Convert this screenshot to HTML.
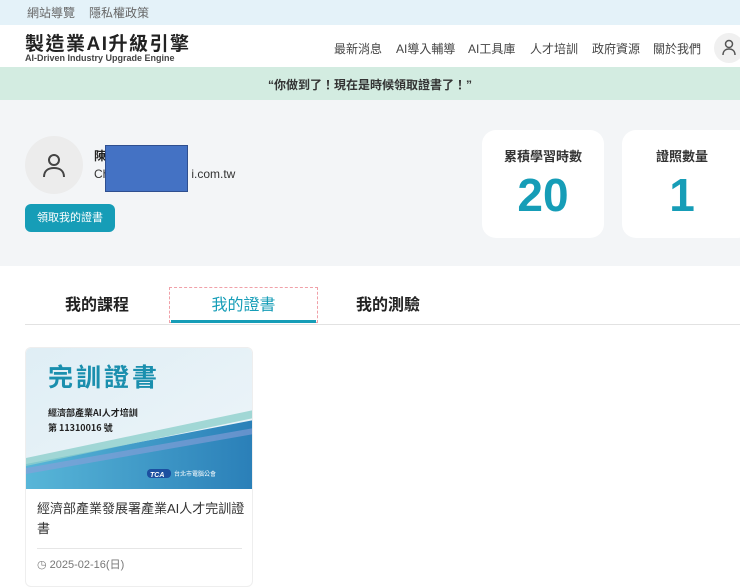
<!DOCTYPE html>
<html><head><meta charset="utf-8"><style>
*{margin:0;padding:0;box-sizing:border-box}
body{width:740px;height:580px;overflow:hidden;background:#fff;font-family:"Liberation Sans","Noto Sans CJK TC",sans-serif;position:relative;color:#222}
.a{position:absolute}
</style></head><body>
<div class="a" style="left:0;top:0;width:740px;height:25px;background:#e4f2f9"></div>
<div class="a" style="left:27px;top:4px;font-size:12px;color:#666">網站導覽</div>
<div class="a" style="left:89px;top:4px;font-size:12px;color:#666">隱私權政策</div>
<div class="a" style="left:0;top:25px;width:740px;height:42px;background:#fff"></div>
<div class="a" style="left:25px;top:29px;font-size:19px;font-weight:bold;color:#222;letter-spacing:1.5px">製造業AI升級引擎</div>
<div class="a" style="left:25px;top:53px;font-size:9px;font-weight:bold;color:#444">AI-Driven Industry Upgrade Engine</div>
<div class="a" style="left:334px;top:40px;font-size:12px;color:#444">最新消息</div>
<div class="a" style="left:396px;top:40px;font-size:12px;color:#444">AI導入輔導</div>
<div class="a" style="left:468px;top:40px;font-size:12px;color:#444">AI工具庫</div>
<div class="a" style="left:530px;top:40px;font-size:12px;color:#444">人才培訓</div>
<div class="a" style="left:592px;top:40px;font-size:12px;color:#444">政府資源</div>
<div class="a" style="left:653px;top:40px;font-size:12px;color:#444">關於我們</div>
<div class="a" style="left:714px;top:33px;width:30px;height:30px;border-radius:50%;background:#f0f0f0"></div>
<svg class="a" style="left:720px;top:38px" width="18" height="18" viewBox="0 0 18 18" fill="none" stroke="#555" stroke-width="1.5"><circle cx="9" cy="6" r="3.5"/><path d="M3 17c0-4 2.5-6 6-6s6 2 6 6"/></svg>
<div class="a" style="left:0;top:67px;width:740px;height:33px;background:#d3ece1"></div>
<div class="a" style="left:0;top:76px;width:740px;text-align:center;font-size:12px;font-weight:bold;color:#333">“你做到了！現在是時候領取證書了！”</div>
<div class="a" style="left:0;top:100px;width:740px;height:166px;background:#f3f5f7"></div>
<div class="a" style="left:25px;top:136px;width:58px;height:58px;border-radius:50%;background:#ececec"></div>
<svg class="a" style="left:42px;top:152px" width="24" height="26" viewBox="0 0 24 26" fill="none" stroke="#444" stroke-width="2"><circle cx="12" cy="8" r="5"/><path d="M2 25c0-6 4-9 10-9s10 3 10 9"/></svg>
<div class="a" style="left:94px;top:147px;font-size:12px;font-weight:bold">陳</div>
<div class="a" style="left:94px;top:167px;font-size:12px;color:#333">Ch<span style="display:inline-block;width:82px"></span>i.com.tw</div>
<div class="a" style="left:105px;top:145px;width:83px;height:47px;background:#4472c4;border:1px solid #2f4f8f"></div>
<div class="a" style="left:25px;top:204px;width:90px;height:28px;border-radius:6px;background:#169db7;color:#fff;font-size:11px;text-align:center;line-height:28px">領取我的證書</div>
<div class="a" style="left:482px;top:130px;width:122px;height:108px;border-radius:14px;background:#fff"></div>
<div class="a" style="left:482px;top:146px;width:122px;text-align:center;font-size:13px;font-weight:bold;color:#333">累積學習時數</div>
<div class="a" style="left:482px;top:168px;width:122px;text-align:center;font-size:46px;font-weight:900;color:#169db7">20</div>
<div class="a" style="left:622px;top:130px;width:130px;height:108px;border-radius:14px;background:#fff"></div>
<div class="a" style="left:622px;top:146px;width:120px;text-align:center;font-size:13px;font-weight:bold;color:#333">證照數量</div>
<div class="a" style="left:622px;top:168px;width:120px;text-align:center;font-size:46px;font-weight:900;color:#169db7">1</div>
<div class="a" style="left:65px;top:291px;font-size:16px;font-weight:bold">我的課程</div>
<div class="a" style="left:169px;top:287px;width:149px;height:36px;border:1.5px dashed #f0a0a8"></div>
<div class="a" style="left:171px;top:291px;width:145px;text-align:center;font-size:16px;color:#169db7">我的證書</div>
<div class="a" style="left:171px;top:320px;width:145px;height:3px;background:#169db7"></div>
<div class="a" style="left:356px;top:291px;font-size:16px;font-weight:bold">我的測驗</div>
<div class="a" style="left:25px;top:324px;width:715px;height:1px;background:#e2e2e2"></div>
<div class="a" style="left:25px;top:347px;width:228px;height:240px;border-radius:6px;border:1px solid #eee;overflow:hidden;background:#fff">
<svg width="228" height="141" viewBox="0 0 228 141"><defs><linearGradient id="g" x1="0" y1="0" x2="1" y2="1"><stop offset="0" stop-color="#dfeef5"/><stop offset="1" stop-color="#eef5f9"/></linearGradient><linearGradient id="b" x1="0" y1="0" x2="1" y2="0"><stop offset="0" stop-color="#58b6d8"/><stop offset="1" stop-color="#2a7fb8"/></linearGradient></defs>
<rect width="228" height="141" fill="url(#g)"/>
<polygon points="0,116 228,72 228,141 0,141" fill="url(#b)"/>
<polygon points="0,110 228,62 228,70 0,118" fill="#8fd0cc" opacity=".8"/>
<polygon points="0,120 228,80 228,86 0,126" fill="#8a9fd8" opacity=".6"/>
<text x="22" y="38" font-size="25" fill="#1a8fae" font-weight="bold" font-family="Noto Sans CJK TC,sans-serif" letter-spacing="3">完訓證書</text>
<text x="22" y="68" font-size="9" fill="#222" font-weight="bold" font-family="Noto Sans CJK TC,sans-serif">經濟部產業AI人才培訓</text>
<text x="22" y="83" font-size="9" fill="#222" font-weight="bold" font-family="Noto Sans CJK TC,sans-serif">第 11310016 號</text>
<rect x="121" y="121" width="24" height="9" rx="4" fill="#1c4fa0"/><text x="124" y="129" font-size="7" fill="#fff" font-style="italic" font-weight="bold">TCA</text>
<text x="148" y="128" font-size="6" fill="#fff">台北市電腦公會</text>
</svg>
<div style="position:absolute;left:11px;top:151px;width:210px;font-size:13px;line-height:20px;color:#333">經濟部產業發展署產業AI人才完訓證書</div>
<div style="position:absolute;left:11px;top:200px;width:205px;height:1px;background:#e6e6e6"></div>
<div style="position:absolute;left:11px;top:208px;font-size:11px;color:#777">◷ 2025-02-16(日)</div>
</div>
</body></html>
